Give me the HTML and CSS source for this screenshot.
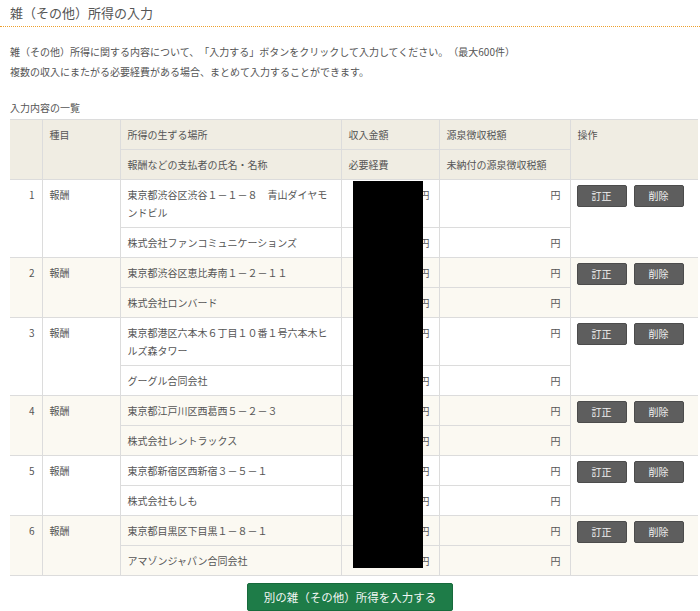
FILE: index.html
```html
<!DOCTYPE html>
<html lang="ja">
<head>
<meta charset="utf-8">
<title>雑（その他）所得の入力</title>
<link rel="stylesheet" href="styles.css">
</head>
<body>
<h1 class="page-title">雑（その他）所得の入力</h1>
<p class="lead">雑（その他）所得に関する内容について、「入力する」ボタンをクリックして入力してください。（最大600件）<br>複数の収入にまたがる必要経費がある場合、まとめて入力することができます。</p>
<div class="list-label">入力内容の一覧</div>
<div class="table-wrap">
<table class="list">
<colgroup>
<col class="c-no"><col class="c-kind"><col class="c-place"><col class="c-amt"><col class="c-tax"><col class="c-op">
</colgroup>
<thead>
<tr>
<th rowspan="2"></th>
<th rowspan="2">種目</th>
<th>所得の生ずる場所</th>
<th>収入金額</th>
<th>源泉徴収税額</th>
<th rowspan="2">操作</th>
</tr>
<tr>
<th>報酬などの支払者の氏名・名称</th>
<th>必要経費</th>
<th>未納付の源泉徴収税額</th>
</tr>
</thead>
<tbody class="rec">
<tr><td rowspan="2" class="no">1</td><td rowspan="2">報酬</td><td>東京都渋谷区渋谷１－１－８　青山ダイヤモンドビル</td><td class="yen">円</td><td class="yen">円</td><td rowspan="2" class="ops"><span class="btn">訂正</span><span class="btn">削除</span></td></tr>
<tr><td>株式会社ファンコミュニケーションズ</td><td class="yen">円</td><td class="yen">円</td></tr>
</tbody>
<tbody class="rec alt">
<tr><td rowspan="2" class="no">2</td><td rowspan="2">報酬</td><td>東京都渋谷区恵比寿南１－２－１１</td><td class="yen">円</td><td class="yen">円</td><td rowspan="2" class="ops"><span class="btn">訂正</span><span class="btn">削除</span></td></tr>
<tr><td>株式会社ロンバード</td><td class="yen">円</td><td class="yen">円</td></tr>
</tbody>
<tbody class="rec">
<tr><td rowspan="2" class="no">3</td><td rowspan="2">報酬</td><td>東京都港区六本木６丁目１０番１号六本木ヒルズ森タワー</td><td class="yen">円</td><td class="yen">円</td><td rowspan="2" class="ops"><span class="btn">訂正</span><span class="btn">削除</span></td></tr>
<tr><td>グーグル合同会社</td><td class="yen">円</td><td class="yen">円</td></tr>
</tbody>
<tbody class="rec alt">
<tr><td rowspan="2" class="no">4</td><td rowspan="2">報酬</td><td>東京都江戸川区西葛西５－２－３</td><td class="yen">円</td><td class="yen">円</td><td rowspan="2" class="ops"><span class="btn">訂正</span><span class="btn">削除</span></td></tr>
<tr><td>株式会社レントラックス</td><td class="yen">円</td><td class="yen">円</td></tr>
</tbody>
<tbody class="rec">
<tr><td rowspan="2" class="no">5</td><td rowspan="2">報酬</td><td>東京都新宿区西新宿３－５－１</td><td class="yen">円</td><td class="yen">円</td><td rowspan="2" class="ops"><span class="btn">訂正</span><span class="btn">削除</span></td></tr>
<tr><td>株式会社もしも</td><td class="yen">円</td><td class="yen">円</td></tr>
</tbody>
<tbody class="rec alt">
<tr><td rowspan="2" class="no">6</td><td rowspan="2">報酬</td><td>東京都目黒区下目黒１－８－１</td><td class="yen">円</td><td class="yen">円</td><td rowspan="2" class="ops"><span class="btn">訂正</span><span class="btn">削除</span></td></tr>
<tr><td>アマゾンジャパン合同会社</td><td class="yen">円</td><td class="yen">円</td></tr>
</tbody>
</table>
<div class="redact"></div>
</div>
<div class="actions"><span class="btn-main">別の雑（その他）所得を入力する</span></div>
</body>
</html>
```
FILE: styles.css
```css
html, body {
  margin: 0;
  padding: 0;
  background: #fff;
}
body {
  font-family: "Noto Sans CJK JP", "Noto Sans", sans-serif;
  color: #555;
  font-size: 10px;
  text-spacing-trim: space-all;
}
.page-title {
  margin: 0;
  padding: 4px 10px 4px;
  font-size: 13px;
  line-height: 18px;
  font-weight: normal;
  color: #555;
  border-bottom: 1px dotted #eda02e;
}
.lead {
  margin: 15px 0 0;
  padding: 0 10px;
  font-size: 10px;
  line-height: 20px;
  color: #555;
}
.list-label {
  margin: 16px 0 1px;
  padding: 0 10px;
  line-height: 20px;
  font-size: 10px;
  color: #555;
}
.table-wrap {
  position: relative;
  margin-left: 10px;
  width: 688px;
}
.list {
  width: 688px;
  table-layout: fixed;
  border-collapse: collapse;
  font-size: 10px;
  color: #555;
}
.c-no { width: 32px; }
.c-kind { width: 78px; }
.c-place { width: 221px; }
.c-amt { width: 98px; }
.c-tax { width: 131px; }
.c-op { width: 128px; }
.list th,
.list td {
  border: 1px solid #dcdcdc;
  padding: 6px 7px 5px;
  line-height: 18px;
  vertical-align: top;
  text-align: left;
  font-weight: normal;
}
.list tr > :first-child { border-left: none; }
.list tr > :last-child { border-right: none; }
.list thead tr:last-child > :last-child { border-right: 1px solid #dcdcdc; }
.list th {
  background: #f0ede3;
}
.list .no {
  text-align: right;
  padding-right: 7px;
  border-left: none;
}
.list .yen {
  text-align: right;
  padding-right: 9px;
}
.rec.alt td {
  background: #fbf9f2;
}
.list .ops {
  padding: 5px 6px;
  border-right: none;
}
.btn {
  display: inline-block;
  box-sizing: border-box;
  width: 50px;
  height: 22px;
  line-height: 20px;
  margin-right: 7px;
  text-align: center;
  background: #5e5e5e;
  border: 1px solid #4c4c4c;
  border-radius: 2px;
  color: #f2f2f2;
  font-size: 10px;
  vertical-align: top;
}
.redact {
  position: absolute;
  left: 343px;
  top: 62px;
  width: 70px;
  height: 387px;
  background: #000;
}
.actions {
  display: flex;
  justify-content: center;
  margin-top: 7px;
}
.btn-main {
  display: inline-block;
  box-sizing: border-box;
  width: 206px;
  height: 28px;
  line-height: 26px;
  text-align: center;
  background: #1e7c48;
  border: 1px solid #176a3c;
  border-radius: 2px;
  color: #f3f7f4;
  font-size: 11.5px;
}
```
